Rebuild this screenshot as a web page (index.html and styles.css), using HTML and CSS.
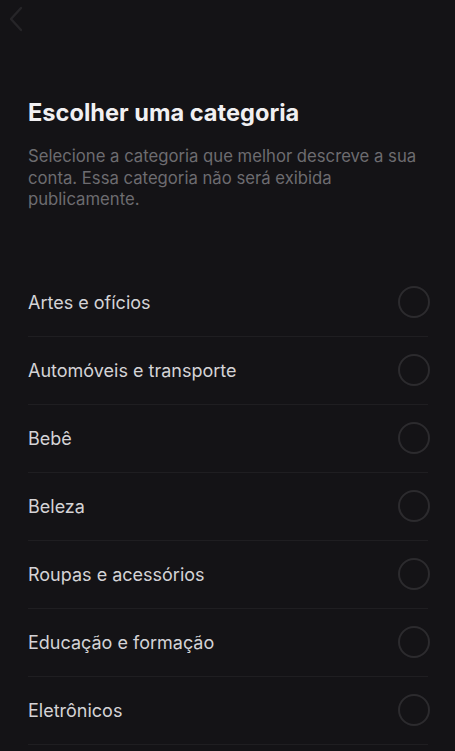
FILE: index.html
```html
<!DOCTYPE html>
<html lang="pt">
<head>
    <meta charset="UTF-8">
    <meta name="viewport" content="width=device-width, initial-scale=1.0">
    <title>Escolher uma categoria</title>
    <link rel="stylesheet" href="styles.css">
</head>
<body>
    <div class="topbar">
        <svg class="back" width="14" height="26" viewBox="0 0 14 26">
            <path d="M12 2 L2 13 L12 24" fill="none" stroke="#262528" stroke-width="2.4" stroke-linecap="round" stroke-linejoin="round"/>
        </svg>
    </div>

    <div class="content">
        <h1>Escolher uma categoria</h1>
        <p class="desc">Selecione a categoria que melhor descreve a sua conta. Essa categoria não será exibida publicamente.</p>

        <ul class="list">
            <li><span>Artes e ofícios</span><i class="radio"></i></li>
            <li><span>Automóveis e transporte</span><i class="radio"></i></li>
            <li><span>Bebê</span><i class="radio"></i></li>
            <li><span>Beleza</span><i class="radio"></i></li>
            <li><span>Roupas e acessórios</span><i class="radio"></i></li>
            <li><span>Educação e formação</span><i class="radio"></i></li>
            <li><span>Eletrônicos</span><i class="radio"></i></li>
        </ul>
    </div>
</body>
</html>
```

FILE: styles.css
```css
body {
    margin: 0;
    padding: 0;
    background: #141316;
    font-family: Inter, "Open Sans", sans-serif;
    height: 751px;
    overflow: hidden;
}

.topbar {
    height: 40px;
    padding: 6px 0 0 9px;
    box-sizing: border-box;
}

.back {
    display: block;
}

.content {
    padding: 58px 27px 0 28px;
}

h1 {
    margin: 0;
    color: #f1f0f2;
    font-size: 23.6px;
    font-weight: 700;
    line-height: 30px;
}

.desc {
    margin: 18px 0 0;
    color: #6d6c70;
    font-size: 16.7px;
    line-height: 21.5px;
}

.list {
    list-style: none;
    margin: 58px 0 0;
    padding: 0;
}

.list li {
    height: 67px;
    display: flex;
    align-items: center;
    justify-content: space-between;
    border-bottom: 1px solid #1f1e21;
    color: #d4d3d6;
    font-size: 18px;
}

.radio {
    width: 28px;
    height: 28px;
    border: 2px solid #2c2b2e;
    border-radius: 50%;
    margin-right: -2px;
}
```
